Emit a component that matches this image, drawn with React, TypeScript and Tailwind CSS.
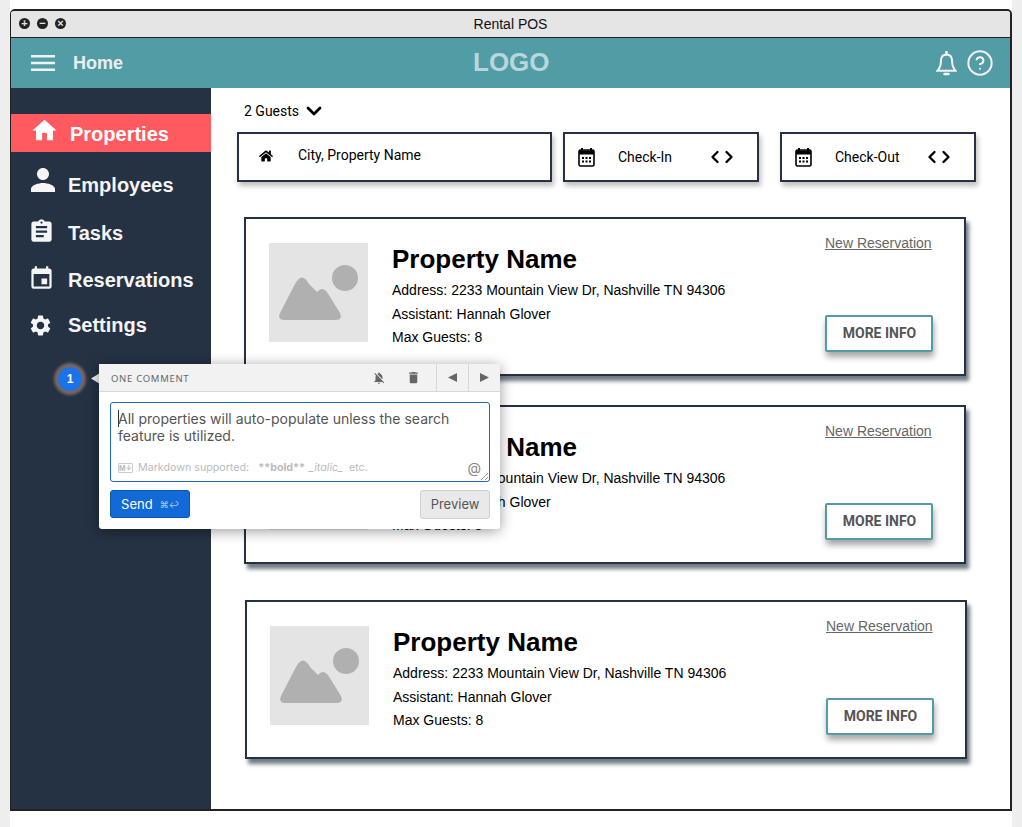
import { ChevronDown, ChevronLeft, ChevronRight, CircleHelp } from 'lucide-react';
import { FaHome } from 'react-icons/fa';
import { MdAssignment, MdDelete, MdEvent, MdHome, MdNotificationsOff, MdPerson, MdSettings } from 'react-icons/md';

const navItems = [
    { label: 'Employees', Icon: MdPerson, row: 'mt-[14px] h-[38px]', icon: 'text-[36px] ml-[14px] mb-[10px]', text: 'ml-[7px]' },
    { label: 'Tasks', Icon: MdAssignment, row: 'mt-[10px] h-[38px]', icon: 'text-[27px] ml-[17px] mb-[4px]', text: 'ml-[13px]' },
    { label: 'Reservations', Icon: MdEvent, row: 'mt-[9px] h-[38px]', icon: 'text-[27px] ml-[17px] mb-[4px]', text: 'ml-[13px]' },
    { label: 'Settings', Icon: MdSettings, row: 'mt-[7px] h-[38px]', icon: 'text-[25px] ml-[17px]', text: 'ml-[15px]' },
];

const cards = [
    { id: 1, className: 'mt-[35px] ml-[33px]' },
    { id: 2, className: 'mt-[29px] ml-[33px]' },
    { id: 3, className: 'mt-[36px] ml-[34px]' },
];

const CalendarIcon = () => (
    <svg width="17" height="19" viewBox="0 0 17 19" className="shrink-0">
        <path d="M3 0h2v3H3zM12 0h2v3h-2z" fill="#000" />
        <rect x="1" y="2" width="15" height="16" rx="1.5" fill="none" stroke="#000" strokeWidth="1.6" />
        <path d="M1 2.5h15v4H1z" fill="#000" />
        <path d="M4 9h2v2H4zM7.5 9h2v2h-2zM11 9h2v2h-2zM4 12.5h2v2H4zM7.5 12.5h2v2h-2zM11 12.5h2v2h-2z" fill="#000" />
    </svg>
);

const BellIcon = () => (
    <svg width="21" height="25" viewBox="0 0 21 25" fill="none" stroke="#f2f2f2" strokeWidth="2">
        <path d="M10.500 3.500c-3.800 0-5.600 3-5.600 7 0 4.800-1.300 6.800-3.400 9.200h18c-2.100-2.400-3.400-4.400-3.400-9.200 0-4-1.800-7-5.600-7z" />
        <path d="M10.500 .5v3" strokeLinecap="round" strokeWidth="2.500" />
        <path d="M8.500 23h4" strokeLinecap="round" strokeWidth="2.500" />
    </svg>
);

const MenuIcon = () => (
    <svg width="24" height="16" viewBox="0 0 24 16" fill="#eef3f4" className="ml-[20px]">
        <path d="M0 0h24v2.400H0zM0 6.800h24v2.400H0zM0 13.600h24V16H0z" />
    </svg>
);

const DateBox = ({ label, className }: { label: string; className: string }) => (
    <div className={`flex h-[50px] w-[196px] items-center border-2 border-[#243244] bg-white pl-[13px] shadow-[2px_4px_5px_rgba(0,0,0,0.25)] ${className}`}>
        <CalendarIcon />
        <span className="ml-[23px] w-[87px] text-[14px] text-black">{label}</span>
        <ChevronLeft size={20} strokeWidth={2.800} className="text-black" />
        <ChevronRight size={20} strokeWidth={2.800} className="-ml-[6px] text-black" />
    </div>
);

const PropertyCard = ({ className }: { className: string }) => (
    <div className={`flex h-[159px] w-[722px] border-2 border-[#243244] bg-white shadow-[3px_5px_4px_rgba(36,50,68,0.65)] ${className}`}>
        <div className="ml-[23px] mt-[24px] flex h-[99px] w-[99px] shrink-0 items-center justify-center bg-[#e4e4e4]">
            <svg width="99" height="99" viewBox="0 0 99 99" fill="#b0b0b0">
                <circle cx="76" cy="35" r="13" />
                <path d="M11 70 L26 41 Q33 28 40 41 L48 49 Q53 43 58 49 L71 70 Q74 77 67 77 L15 77 Q8 77 11 70Z" />
            </svg>
        </div>
        <div className="ml-[24px] flex-1 font-['Liberation_Sans',sans-serif]">
            <h2 className="mt-[24px] text-[26px] font-bold leading-[32px] text-black">Property Name</h2>
            <p className="mt-[4px] text-[14px] leading-[23.500px] text-black">Address: 2233 Mountain View Dr, Nashville TN 94306</p>
            <p className="text-[14px] leading-[23.500px] text-black">Assistant: Hannah Glover</p>
            <p className="text-[14px] leading-[23.500px] text-black">Max Guests: 8</p>
        </div>
        <div className="mr-[31px] flex w-[108px] flex-col items-start">
            <a className="mt-[15px] text-[14px] leading-[18px] text-[#666] underline font-['Liberation_Sans',sans-serif]">New Reservation</a>
            <button className="mt-[63px] h-[37px] w-[108px] rounded-[2px] border-2 border-[#529ca6] bg-white pl-[1px] text-[14px] font-bold text-[#555] shadow-[1px_5px_6px_rgba(0,0,0,0.35)]">
                MORE INFO
            </button>
        </div>
    </div>
);

const CommentPopover = () => (
    <>
        <div className="absolute left-[58px] top-[367px] flex h-[24px] w-[24px] items-center justify-center rounded-full bg-[#1a73e8] text-[12px] font-bold text-white shadow-[0_0_3px_4px_rgba(160,125,110,0.7)] font-['Liberation_Sans',sans-serif]">
            1
        </div>
        <div className="absolute left-[91px] top-[373px] h-[11px] w-[9px] bg-[#f2f2f2] [clip-path:polygon(100%_0,0_50%,100%_100%)]" />
        <div className="absolute left-[99px] top-[364px] w-[401px] rounded-[3px] bg-white shadow-[0_2px_14px_rgba(0,0,0,0.4)]">
            <div className="flex h-[28px] items-center border-b border-[#d8d8d8] bg-[#f2f2f2] pl-[12px] text-[#666]">
                <span className="flex-1 pt-[3px] text-[9.500px] tracking-[0.7px] font-['Noto_Sans',sans-serif]">ONE COMMENT</span>
                <MdNotificationsOff size={14} className="text-[#666]" />
                <MdDelete size={15} className="ml-[20px] mr-[15px] text-[#666]" />
                <div className="flex h-full w-[32px] items-center justify-center border-l border-[#d8d8d8]">
                    <svg width="9" height="9" viewBox="0 0 9 9" fill="#666"><path d="M9 0v9L0 4.500z" /></svg>
                </div>
                <div className="flex h-full w-[32px] items-center justify-center border-l border-[#d8d8d8]">
                    <svg width="9" height="9" viewBox="0 0 9 9" fill="#666"><path d="M0 0v9l9-4.500z" /></svg>
                </div>
            </div>
            <div className="pb-[10px] pl-[11px] pr-[10px] pt-[10px] font-['Inter',sans-serif]">
                <div className="relative h-[80px] rounded-[3px] border border-[#1a66c9] pl-[7px] pt-[7px]">
                    <span className="absolute left-[7px] top-[7px] h-[17px] w-px bg-[#333]" />
                    <p className="text-[14px] leading-[17px] text-[#555]">
                        All properties will auto-populate unless the search
                        <br />
                        feature is utilized.
                    </p>
                    <div className="mt-[17px] flex items-center text-[10.700px] leading-[14px] text-[#bbb]">
                        <span className="flex h-[10px] w-[15px] items-center justify-center rounded-[1px] border border-[#ccc] text-[7px] font-bold leading-none text-[#bbb]">M↓</span>
                        <span className="ml-[5px]">Markdown supported:</span>
                        <span className="ml-[9px] font-bold">**bold**</span>
                        <span className="ml-[4px] italic">_italic_</span>
                        <span className="ml-[6px]">etc.</span>
                    </div>
                    <span className="absolute bottom-[5px] right-[8px] text-[14px] leading-[16px] text-[#888]">@</span>
                    <svg width="7" height="7" viewBox="0 0 7 7" stroke="#777" strokeWidth="0.8" className="absolute bottom-[1px] right-[1px]">
                        <path d="M0 7 7 0M4 7l3-3" />
                    </svg>
                </div>
                <div className="mt-[8px] flex items-start justify-between">
                    <button className="flex h-[28px] w-[80px] items-center justify-center rounded-[3px] border border-[#0f56ad] bg-[#1269d8] pt-[1px] text-[13px] text-white">
                        Send
                        <span className="ml-[7px] text-[9px] text-[#a9c9f2]">⌘↩</span>
                    </button>
                    <button className="h-[29px] w-[70px] rounded-[3px] border border-[#d0d0d0] bg-[#e9e9e9] text-[13px] text-[#555]">Preview</button>
                </div>
            </div>
        </div>
    </>
);

export default function App() {
    return (
        <div className="relative flex h-[827px] w-[1022px] overflow-hidden bg-white font-['Roboto',sans-serif]">
            <div className="w-[10px] shrink-0 bg-[#eeeeee]" />
            <div className="flex-1 pt-[9px]">
                <div className="flex h-[802px] w-[1002px] flex-col overflow-hidden rounded-t-[5px] border-b-2 border-l border-r-2 border-t-2 border-[#222]">
                    {/* title bar */}
                    <div className="relative flex h-[27px] shrink-0 items-center justify-center border-b border-[#222] bg-[#e5e5e5]">
                        <div className="absolute left-[8px] top-[7px] flex gap-[7px]">
                            {['+', '−', '×'].map(s => (
                                <span key={s} className="flex h-[11px] w-[11px] items-center justify-center rounded-full bg-[#222] text-[11px] font-bold leading-none text-[#e5e5e5] font-['Liberation_Sans',sans-serif]">{s}</span>
                            ))}
                        </div>
                        <span className="text-[14px] text-[#111] font-['Liberation_Sans',sans-serif]">Rental POS</span>
                    </div>

                    {/* header */}
                    <div className="relative flex h-[50px] shrink-0 items-center bg-[#529ca6] font-['Liberation_Sans',sans-serif]">
                        <MenuIcon />
                        <span className="ml-[18px] text-[18px] font-bold text-[#e8eeef]">Home</span>
                        <span className="absolute left-[462px] top-[8px] text-[26px] font-bold leading-[32px] text-[#b9d6da]">LOGO</span>
                        <div className="ml-auto mr-[16px] flex items-center gap-[9px]">
                            <BellIcon />
                            <CircleHelp size={28} strokeWidth={1.7} className="text-[#f2f2f2]" />
                        </div>
                    </div>

                    <div className="flex min-h-0 flex-1">
                        {/* sidebar */}
                        <aside className="w-[200px] shrink-0 bg-[#243244] font-['Liberation_Sans',sans-serif]">
                            <div className="mt-[26px] flex h-[38px] items-center bg-[#ff5a5f] text-white">
                                <MdHome size={29} className="mb-[5px] ml-[19px]" />
                                <span className="ml-[11px] pt-[1px] text-[20px] font-bold">Properties</span>
                            </div>
                            {navItems.map(({ label, Icon, row, icon, text }) => (
                                <div key={label} className={`flex items-center text-[#f5f5f5] ${row}`}>
                                    <Icon className={icon} />
                                    <span className={`text-[20px] font-bold ${text}`}>{label}</span>
                                </div>
                            ))}
                        </aside>

                        {/* main */}
                        <main className="flex-1 bg-white">
                            <div className="ml-[33px] mt-[13px] flex h-[20px] items-center text-[14px] text-black">
                                2 Guests
                                <ChevronDown size={24} strokeWidth={2.800} className="ml-[3px]" />
                            </div>
                            <div className="ml-[26px] mt-[11px] flex">
                                <div className="flex h-[50px] w-[315px] items-center border-2 border-[#243244] bg-white pb-[3px] pl-[20px] text-[14px] text-black shadow-[2px_4px_5px_rgba(0,0,0,0.25)]">
                                    <FaHome size={14} />
                                    <span className="ml-[25px]">City, Property Name</span>
                                </div>
                                <DateBox label="Check-In" className="ml-[11px]" />
                                <DateBox label="Check-Out" className="ml-[21px]" />
                            </div>
                            {cards.map(card => (
                                <PropertyCard key={card.id} className={card.className} />
                            ))}
                        </main>
                    </div>
                </div>
            </div>
            <div className="w-[10px] shrink-0 bg-[#eeeeee]" />
            <CommentPopover />
        </div>
    );
}
